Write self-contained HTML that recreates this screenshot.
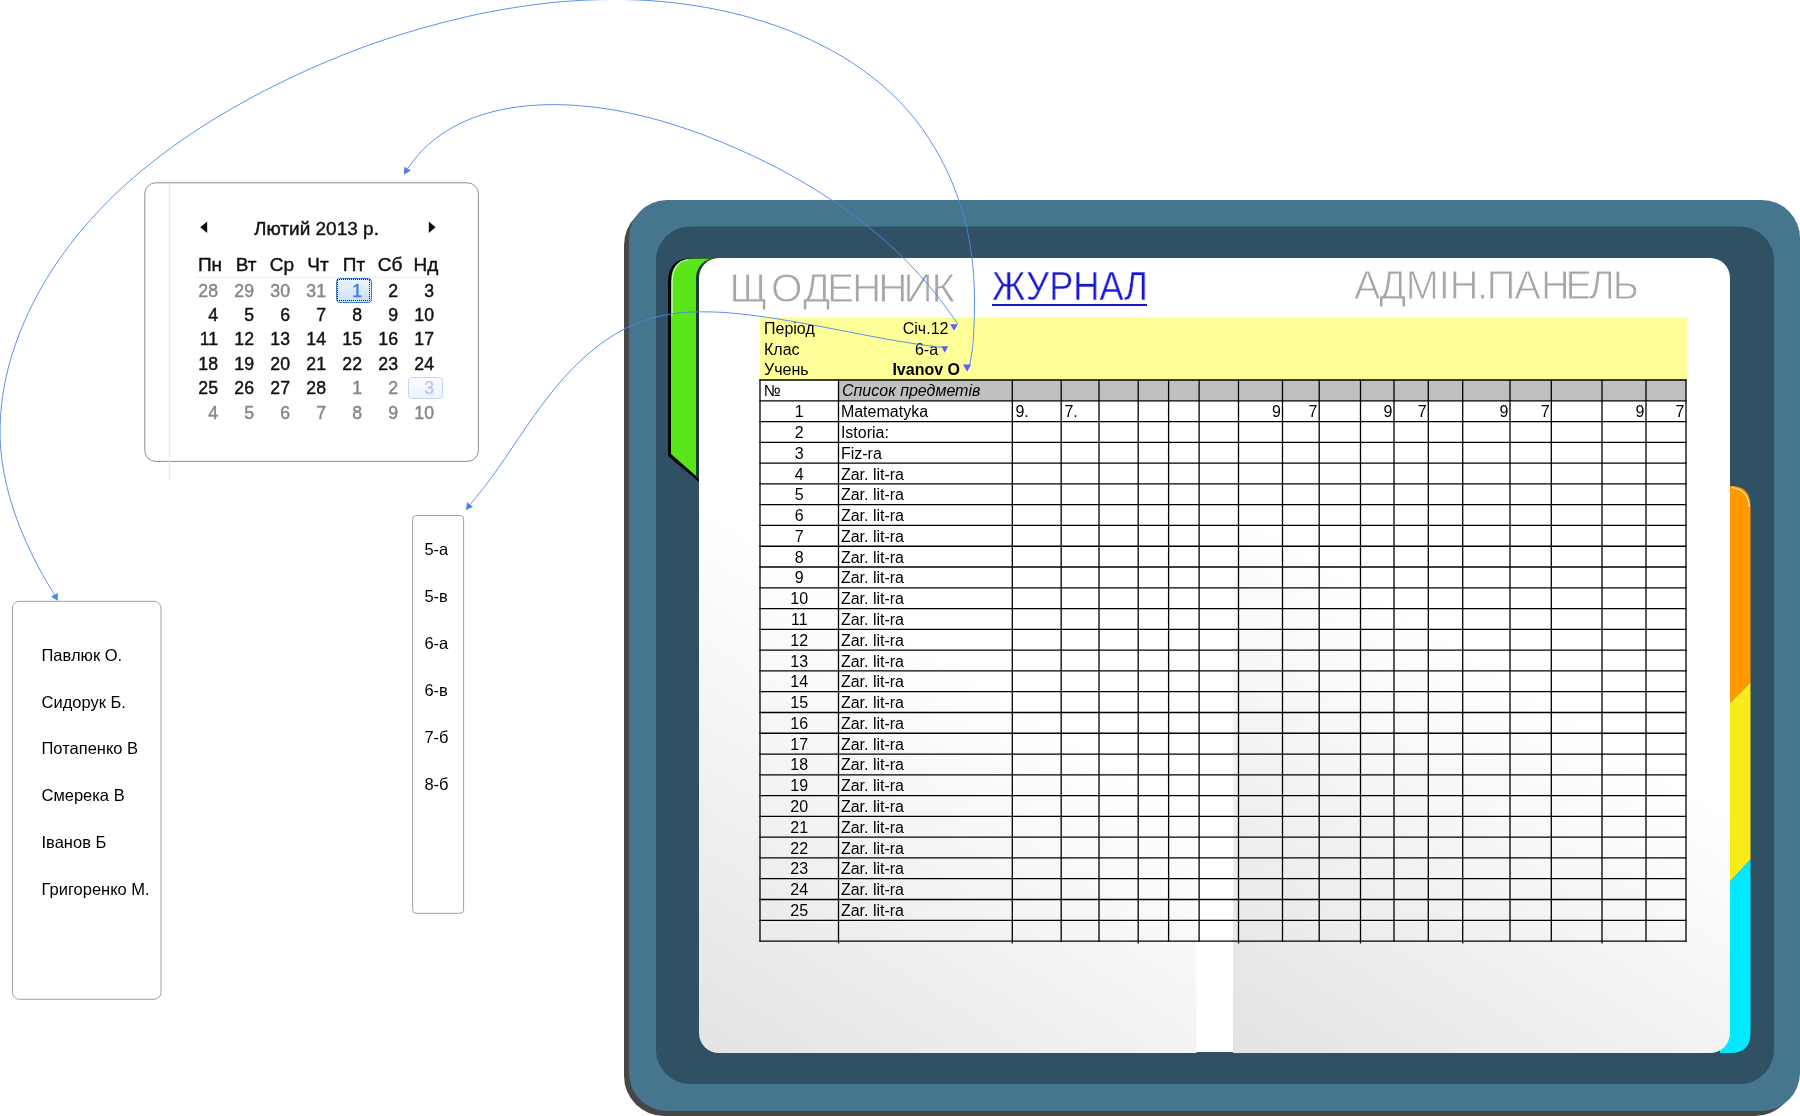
<!DOCTYPE html>
<html lang="uk"><head><meta charset="utf-8"><title>Журнал</title>
<style>
html,body{margin:0;padding:0;background:#fff;}
body{width:1800px;height:1116px;position:relative;overflow:hidden;font-family:"Liberation Sans",sans-serif;color:#000;}
#bg,#fg{position:absolute;left:0;top:0;}
#txt{position:absolute;left:0;top:0;width:1800px;height:1116px;will-change:transform;}
.t{position:absolute;white-space:nowrap;line-height:1;margin:0;}
.c{font-size:16px;}
.nav{font-size:39px;color:#a6a6a6;transform-origin:0 0;will-change:transform;-webkit-text-stroke:1.2px #fff;}
a.nav{color:#1616d4;text-decoration:none;-webkit-text-stroke:0.5px #fff;}
.cal{font-size:19px;color:#111;-webkit-text-stroke:0.45px currentColor;transform:scaleX(0.93);transform-origin:100% 50%;}
.cal.g{color:#858585;}
.calh{font-size:19px;color:#111;-webkit-text-stroke:0.4px currentColor;}
.li{font-size:16.5px;}
</style></head><body>

<svg id="bg" width="1800" height="1116" viewBox="0 0 1800 1116">
<defs><linearGradient id="pgl" gradientUnits="userSpaceOnUse" x1="1197" y1="258" x2="699" y2="1053"><stop offset="0" stop-color="#ffffff"/><stop offset="0.5" stop-color="#ffffff"/><stop offset="1" stop-color="#e3e3e3"/></linearGradient><linearGradient id="pgr" gradientUnits="userSpaceOnUse" x1="1730" y1="258" x2="1233" y2="1053"><stop offset="0" stop-color="#ffffff"/><stop offset="0.5" stop-color="#ffffff"/><stop offset="1" stop-color="#e3e3e3"/></linearGradient><clipPath id="pc"><rect x="699" y="258" width="1031" height="795" rx="20" ry="20"/></clipPath><clipPath id="gc"><path d="M671 454 L671 282 Q671 258.5 694 258.5 L720 258.5 L720 479 L699.5 479 Z"/></clipPath></defs>
<rect x="624" y="205" width="1171" height="911" rx="40" ry="40" fill="#474747"/>
<rect x="629" y="200" width="1171" height="911" rx="38" ry="38" fill="#46768e"/>
<rect x="656" y="226.5" width="1118" height="857.5" rx="34" ry="34" fill="#2f5163"/>
<path d="M668 482 L668 282 Q668 258 692 258 L720 258 L720 482 L699 482 L668 456 Z" fill="#05070c"/>
<path d="M671 454 L671 282 Q671 258.5 694 258.5 L720 258.5 L720 479 L699.5 479 Z" fill="#5ae619"/>
<path d="M672.2 316 L672.2 283 Q672.2 262 688 259.5" fill="none" stroke="#c9f7b0" stroke-width="1.2"/>
<rect x="696" y="258" width="200" height="795" rx="20" ry="20" fill="#1c3c3c" clip-path="url(#gc)"/>
<path d="M1720 486 L1730.5 486 Q1750.5 486 1750.5 506 L1750.5 682.5 L1730 703 L1720 703 Z" fill="#ff9900"/>
<path d="M1720 703 L1730 703 L1750.5 682.5 L1750.5 859.5 L1730 881.5 L1720 881.5 Z" fill="#f7ec19"/>
<path d="M1720 881.5 L1730 881.5 L1750.5 859.5 L1750.5 1033 Q1750.5 1053 1730.5 1053 L1720 1053 Z" fill="#00e9ff"/>
<path d="M1732 487.5 Q1748.5 490 1749.3 507" fill="none" stroke="#ffe9b8" stroke-width="1.2"/>
<g clip-path="url(#pc)"><rect x="699" y="258" width="498" height="795" fill="url(#pgl)"/><rect x="1233" y="258" width="497" height="795" fill="url(#pgr)"/><rect x="1196.5" y="258" width="36.5" height="794" fill="#ffffff"/><rect x="1196.5" y="1052" width="36.5" height="1" fill="#2f5163"/></g>
<rect x="760" y="317.3" width="927.6" height="62.7" fill="#ffff99"/>
<rect x="838.5" y="380" width="847.5" height="20.8" fill="#c0c0c0"/>
<rect x="760" y="380" width="78.5" height="20.8" fill="#ffffff"/>
<rect x="760" y="400.8" width="926" height="540.2" fill="#ffffff" fill-opacity="0"/>
<g stroke="#000" stroke-width="1.3" fill="none"><path d="M759.4 380.00 H1686.6"/><path d="M759.4 400.78 H1686.6"/><path d="M759.4 421.56 H1686.6"/><path d="M759.4 442.34 H1686.6"/><path d="M759.4 463.12 H1686.6"/><path d="M759.4 483.90 H1686.6"/><path d="M759.4 504.68 H1686.6"/><path d="M759.4 525.46 H1686.6"/><path d="M759.4 546.24 H1686.6"/><path d="M759.4 567.02 H1686.6"/><path d="M759.4 587.80 H1686.6"/><path d="M759.4 608.58 H1686.6"/><path d="M759.4 629.36 H1686.6"/><path d="M759.4 650.14 H1686.6"/><path d="M759.4 670.92 H1686.6"/><path d="M759.4 691.70 H1686.6"/><path d="M759.4 712.48 H1686.6"/><path d="M759.4 733.26 H1686.6"/><path d="M759.4 754.04 H1686.6"/><path d="M759.4 774.82 H1686.6"/><path d="M759.4 795.60 H1686.6"/><path d="M759.4 816.38 H1686.6"/><path d="M759.4 837.16 H1686.6"/><path d="M759.4 857.94 H1686.6"/><path d="M759.4 878.72 H1686.6"/><path d="M759.4 899.50 H1686.6"/><path d="M759.4 920.28 H1686.6"/><path d="M759.4 941.06 H1686.6"/><path d="M760.00 379.40 V941.66"/><path d="M838.50 379.40 V943.56"/><path d="M1012.30 379.40 V943.56"/><path d="M1061.20 379.40 V941.66"/><path d="M1099.00 379.40 V941.66"/><path d="M1138.20 379.40 V943.56"/><path d="M1168.60 379.40 V941.66"/><path d="M1199.10 379.40 V941.66"/><path d="M1238.50 379.40 V943.56"/><path d="M1282.50 379.40 V941.66"/><path d="M1319.20 379.40 V941.66"/><path d="M1360.50 379.40 V943.56"/><path d="M1394.00 379.40 V941.66"/><path d="M1428.30 379.40 V941.66"/><path d="M1462.70 379.40 V943.56"/><path d="M1510.00 379.40 V941.66"/><path d="M1551.30 379.40 V941.66"/><path d="M1602.00 379.40 V943.56"/><path d="M1646.00 379.40 V941.66"/><path d="M1686.00 379.40 V941.66"/></g>
<path d="M950.2 324.3 L957.8 324.3 L954.0 330.8 Z" fill="#5d5dff"/>
<path d="M941.2 346.2 L948.2 346.2 L944.7 352.8 Z" fill="#5d5dff"/>
<path d="M963.0 364.6 L971.2 364.6 L967.1 371.8 Z" fill="#5d5dff"/>
<rect x="144.8" y="182.8" width="333.6" height="278.6" rx="11" ry="11" fill="#fff" stroke="#8e8e8e" stroke-width="1"/>
<path d="M169.3 183 V479.5" stroke="#e4e4e4" stroke-width="1"/>
<rect x="12.4" y="601.3" width="148.6" height="398" rx="7" ry="7" fill="#fff" stroke="#a2a2a2" stroke-width="1"/>
<rect x="412.6" y="515.5" width="51" height="397.8" rx="3.5" ry="3.5" fill="#fff" stroke="#a2a2a2" stroke-width="1"/>
<path d="M200.2 227.2 L207.2 221.4 L207.2 233 Z" fill="#111"/>
<path d="M435.6 227.2 L428.8 221.4 L428.8 233 Z" fill="#111"/>
<path d="M197 277.4 H437" stroke="#f0f0f0" stroke-width="1.2"/>
</svg>
<div id="txt">
<svg id="nv" width="1800" height="340" viewBox="0 0 1800 340" style="position:absolute;left:0;top:0;"><text id="n1" x="729.6 771.1 802.9 827.1 852.0 878.2 903.5 931.4" y="302.4" font-family="Liberation Sans, sans-serif" font-size="40.5" fill="#a6a6a6" stroke="#ffffff" stroke-width="0.9">ЩОДЕННИК</text><text id="n3" x="1354.0 1379.2 1405.8 1438.8 1449.8 1477.0 1486.8 1514.3 1541.0 1565.6 1588.7 1612.8" y="298.9" font-family="Liberation Sans, sans-serif" font-size="39.8" fill="#a6a6a6" stroke="#ffffff" stroke-width="0.9">АДМІН.ПАНЕЛЬ</text></svg>
<a class="t nav" style="left:991.8px;top:267.0px;font-size:39.8px;transform:scaleX(0.908);" id="n2">ЖУРНАЛ</a>
<div class="t" id="n2u" style="left:992px;top:303.5px;width:154.6px;height:2.5px;background:#1616d4;"></div>
<div class="t c" style="left:764.0px;top:320.9px;">Період</div>
<div class="t c" style="left:764.0px;top:341.5px;">Клас</div>
<div class="t c" style="left:764.0px;top:362.1px;">Учень</div>
<div class="t c" style="left:825.6px;top:320.9px;width:200px;text-align:center;">Січ.12</div>
<div class="t c" style="left:826.5px;top:341.5px;width:200px;text-align:center;">6-а</div>
<div class="t c" style="left:826.2px;top:362.1px;width:200px;text-align:center;font-weight:bold;">Ivanov O</div>
<div class="t c" style="left:763.5px;top:382.5px;">№</div>
<div class="t c" style="left:842.0px;top:382.5px;font-style:italic;">Список предметів</div>
<div class="t c" style="left:760px;top:404.1px;width:78.5px;text-align:center;">1</div>
<div class="t c" style="left:840.9px;top:404.1px;">Matematyka</div>
<div class="t c" style="left:760px;top:424.9px;width:78.5px;text-align:center;">2</div>
<div class="t c" style="left:840.9px;top:424.9px;">Istoria:</div>
<div class="t c" style="left:760px;top:445.7px;width:78.5px;text-align:center;">3</div>
<div class="t c" style="left:840.9px;top:445.7px;">Fiz-ra</div>
<div class="t c" style="left:760px;top:466.5px;width:78.5px;text-align:center;">4</div>
<div class="t c" style="left:840.9px;top:466.5px;">Zar. lit-ra</div>
<div class="t c" style="left:760px;top:487.2px;width:78.5px;text-align:center;">5</div>
<div class="t c" style="left:840.9px;top:487.2px;">Zar. lit-ra</div>
<div class="t c" style="left:760px;top:508.0px;width:78.5px;text-align:center;">6</div>
<div class="t c" style="left:840.9px;top:508.0px;">Zar. lit-ra</div>
<div class="t c" style="left:760px;top:528.8px;width:78.5px;text-align:center;">7</div>
<div class="t c" style="left:840.9px;top:528.8px;">Zar. lit-ra</div>
<div class="t c" style="left:760px;top:549.6px;width:78.5px;text-align:center;">8</div>
<div class="t c" style="left:840.9px;top:549.6px;">Zar. lit-ra</div>
<div class="t c" style="left:760px;top:570.4px;width:78.5px;text-align:center;">9</div>
<div class="t c" style="left:840.9px;top:570.4px;">Zar. lit-ra</div>
<div class="t c" style="left:760px;top:591.1px;width:78.5px;text-align:center;">10</div>
<div class="t c" style="left:840.9px;top:591.1px;">Zar. lit-ra</div>
<div class="t c" style="left:760px;top:611.9px;width:78.5px;text-align:center;">11</div>
<div class="t c" style="left:840.9px;top:611.9px;">Zar. lit-ra</div>
<div class="t c" style="left:760px;top:632.7px;width:78.5px;text-align:center;">12</div>
<div class="t c" style="left:840.9px;top:632.7px;">Zar. lit-ra</div>
<div class="t c" style="left:760px;top:653.5px;width:78.5px;text-align:center;">13</div>
<div class="t c" style="left:840.9px;top:653.5px;">Zar. lit-ra</div>
<div class="t c" style="left:760px;top:674.3px;width:78.5px;text-align:center;">14</div>
<div class="t c" style="left:840.9px;top:674.3px;">Zar. lit-ra</div>
<div class="t c" style="left:760px;top:695.0px;width:78.5px;text-align:center;">15</div>
<div class="t c" style="left:840.9px;top:695.0px;">Zar. lit-ra</div>
<div class="t c" style="left:760px;top:715.8px;width:78.5px;text-align:center;">16</div>
<div class="t c" style="left:840.9px;top:715.8px;">Zar. lit-ra</div>
<div class="t c" style="left:760px;top:736.6px;width:78.5px;text-align:center;">17</div>
<div class="t c" style="left:840.9px;top:736.6px;">Zar. lit-ra</div>
<div class="t c" style="left:760px;top:757.4px;width:78.5px;text-align:center;">18</div>
<div class="t c" style="left:840.9px;top:757.4px;">Zar. lit-ra</div>
<div class="t c" style="left:760px;top:778.2px;width:78.5px;text-align:center;">19</div>
<div class="t c" style="left:840.9px;top:778.2px;">Zar. lit-ra</div>
<div class="t c" style="left:760px;top:798.9px;width:78.5px;text-align:center;">20</div>
<div class="t c" style="left:840.9px;top:798.9px;">Zar. lit-ra</div>
<div class="t c" style="left:760px;top:819.7px;width:78.5px;text-align:center;">21</div>
<div class="t c" style="left:840.9px;top:819.7px;">Zar. lit-ra</div>
<div class="t c" style="left:760px;top:840.5px;width:78.5px;text-align:center;">22</div>
<div class="t c" style="left:840.9px;top:840.5px;">Zar. lit-ra</div>
<div class="t c" style="left:760px;top:861.3px;width:78.5px;text-align:center;">23</div>
<div class="t c" style="left:840.9px;top:861.3px;">Zar. lit-ra</div>
<div class="t c" style="left:760px;top:882.1px;width:78.5px;text-align:center;">24</div>
<div class="t c" style="left:840.9px;top:882.1px;">Zar. lit-ra</div>
<div class="t c" style="left:760px;top:902.8px;width:78.5px;text-align:center;">25</div>
<div class="t c" style="left:840.9px;top:902.8px;">Zar. lit-ra</div>
<div class="t c" style="left:1015.4px;top:404.1px;">9.</div>
<div class="t c" style="left:1064.4px;top:404.1px;">7.</div>
<div class="t c" style="left:1220.8px;top:404.1px;width:60px;text-align:right;">9</div>
<div class="t c" style="left:1257.5px;top:404.1px;width:60px;text-align:right;">7</div>
<div class="t c" style="left:1332.3px;top:404.1px;width:60px;text-align:right;">9</div>
<div class="t c" style="left:1366.6px;top:404.1px;width:60px;text-align:right;">7</div>
<div class="t c" style="left:1448.3px;top:404.1px;width:60px;text-align:right;">9</div>
<div class="t c" style="left:1489.6px;top:404.1px;width:60px;text-align:right;">7</div>
<div class="t c" style="left:1584.3px;top:404.1px;width:60px;text-align:right;">9</div>
<div class="t c" style="left:1624.3px;top:404.1px;width:60px;text-align:right;">7</div>
<div class="t calh" id="caltitle" style="left:166.5px;top:219.2px;width:300px;text-align:center;">Лютий 2013 р.</div>
<div class="t calh" style="left:192.0px;top:255.0px;width:36px;text-align:center;">Пн</div>
<div class="t calh" style="left:228.0px;top:255.0px;width:36px;text-align:center;">Вт</div>
<div class="t calh" style="left:264.0px;top:255.0px;width:36px;text-align:center;">Ср</div>
<div class="t calh" style="left:300.0px;top:255.0px;width:36px;text-align:center;">Чт</div>
<div class="t calh" style="left:336.0px;top:255.0px;width:36px;text-align:center;">Пт</div>
<div class="t calh" style="left:372.0px;top:255.0px;width:36px;text-align:center;">Сб</div>
<div class="t calh" style="left:408.0px;top:255.0px;width:36px;text-align:center;">Нд</div>
<div class="t" style="box-sizing:border-box;left:335.5px;top:277.5px;width:36px;height:25px;border:1.5px solid #3d7fd8;border-radius:4px;background:linear-gradient(#eef4fd,#cddff7);"></div>
<div class="t" style="box-sizing:border-box;left:337px;top:279px;width:33px;height:22px;border:1px dotted #0f2260;border-radius:1px;"></div>
<div class="t" style="box-sizing:border-box;left:407.8px;top:376.6px;width:35.4px;height:22.8px;border:1px solid #c3d4f4;border-radius:3.5px;background:linear-gradient(#fbfcff,#eef3fc);"></div>
<div class="t cal g" style="left:182.4px;top:280.5px;width:36px;text-align:right;">28</div>
<div class="t cal g" style="left:218.4px;top:280.5px;width:36px;text-align:right;">29</div>
<div class="t cal g" style="left:254.4px;top:280.5px;width:36px;text-align:right;">30</div>
<div class="t cal g" style="left:290.4px;top:280.5px;width:36px;text-align:right;">31</div>
<div class="t cal" style="left:326.4px;top:280.5px;width:36px;text-align:right;color:#3b80e6;">1</div>
<div class="t cal" style="left:362.4px;top:280.5px;width:36px;text-align:right;">2</div>
<div class="t cal" style="left:398.4px;top:280.5px;width:36px;text-align:right;">3</div>
<div class="t cal" style="left:182.4px;top:304.9px;width:36px;text-align:right;">4</div>
<div class="t cal" style="left:218.4px;top:304.9px;width:36px;text-align:right;">5</div>
<div class="t cal" style="left:254.4px;top:304.9px;width:36px;text-align:right;">6</div>
<div class="t cal" style="left:290.4px;top:304.9px;width:36px;text-align:right;">7</div>
<div class="t cal" style="left:326.4px;top:304.9px;width:36px;text-align:right;">8</div>
<div class="t cal" style="left:362.4px;top:304.9px;width:36px;text-align:right;">9</div>
<div class="t cal" style="left:398.4px;top:304.9px;width:36px;text-align:right;">10</div>
<div class="t cal" style="left:182.4px;top:329.4px;width:36px;text-align:right;">11</div>
<div class="t cal" style="left:218.4px;top:329.4px;width:36px;text-align:right;">12</div>
<div class="t cal" style="left:254.4px;top:329.4px;width:36px;text-align:right;">13</div>
<div class="t cal" style="left:290.4px;top:329.4px;width:36px;text-align:right;">14</div>
<div class="t cal" style="left:326.4px;top:329.4px;width:36px;text-align:right;">15</div>
<div class="t cal" style="left:362.4px;top:329.4px;width:36px;text-align:right;">16</div>
<div class="t cal" style="left:398.4px;top:329.4px;width:36px;text-align:right;">17</div>
<div class="t cal" style="left:182.4px;top:353.8px;width:36px;text-align:right;">18</div>
<div class="t cal" style="left:218.4px;top:353.8px;width:36px;text-align:right;">19</div>
<div class="t cal" style="left:254.4px;top:353.8px;width:36px;text-align:right;">20</div>
<div class="t cal" style="left:290.4px;top:353.8px;width:36px;text-align:right;">21</div>
<div class="t cal" style="left:326.4px;top:353.8px;width:36px;text-align:right;">22</div>
<div class="t cal" style="left:362.4px;top:353.8px;width:36px;text-align:right;">23</div>
<div class="t cal" style="left:398.4px;top:353.8px;width:36px;text-align:right;">24</div>
<div class="t cal" style="left:182.4px;top:378.2px;width:36px;text-align:right;">25</div>
<div class="t cal" style="left:218.4px;top:378.2px;width:36px;text-align:right;">26</div>
<div class="t cal" style="left:254.4px;top:378.2px;width:36px;text-align:right;">27</div>
<div class="t cal" style="left:290.4px;top:378.2px;width:36px;text-align:right;">28</div>
<div class="t cal g" style="left:326.4px;top:378.2px;width:36px;text-align:right;">1</div>
<div class="t cal g" style="left:362.4px;top:378.2px;width:36px;text-align:right;">2</div>
<div class="t cal g" style="left:398.4px;top:378.2px;width:36px;text-align:right;color:#bcc8f0;">3</div>
<div class="t cal g" style="left:182.4px;top:402.7px;width:36px;text-align:right;">4</div>
<div class="t cal g" style="left:218.4px;top:402.7px;width:36px;text-align:right;">5</div>
<div class="t cal g" style="left:254.4px;top:402.7px;width:36px;text-align:right;">6</div>
<div class="t cal g" style="left:290.4px;top:402.7px;width:36px;text-align:right;">7</div>
<div class="t cal g" style="left:326.4px;top:402.7px;width:36px;text-align:right;">8</div>
<div class="t cal g" style="left:362.4px;top:402.7px;width:36px;text-align:right;">9</div>
<div class="t cal g" style="left:398.4px;top:402.7px;width:36px;text-align:right;">10</div>
<div class="t li" style="left:41.5px;top:646.5px;">Павлюк О.</div>
<div class="t li" style="left:41.5px;top:693.5px;">Сидорук Б.</div>
<div class="t li" style="left:41.5px;top:740.4px;">Потапенко В</div>
<div class="t li" style="left:41.5px;top:787.4px;">Смерека В</div>
<div class="t li" style="left:41.5px;top:834.3px;">Іванов Б</div>
<div class="t li" style="left:41.5px;top:881.3px;">Григоренко М.</div>
<div class="t li" style="left:424.4px;top:541.0px;">5-а</div>
<div class="t li" style="left:424.4px;top:588.0px;">5-в</div>
<div class="t li" style="left:424.4px;top:634.9px;">6-а</div>
<div class="t li" style="left:424.4px;top:681.9px;">6-в</div>
<div class="t li" style="left:424.4px;top:728.8px;">7-б</div>
<div class="t li" style="left:424.4px;top:775.8px;">8-б</div>
</div>
<svg id="fg" width="1800" height="1116" viewBox="0 0 1800 1116">
<g fill="none" stroke="#4a86e8" stroke-width="0.9">
<path d="M54.6 595.0 C52.6 591.6 46.5 581.6 42.6 574.7 C38.8 567.8 35.0 560.7 31.5 553.4 C28.0 546.1 24.6 538.7 21.5 531.1 C18.4 523.5 15.5 515.8 13.0 508.0 C10.5 500.2 8.2 492.4 6.4 484.5 C4.6 476.6 3.0 468.6 2.0 460.7 C0.9 452.8 0.3 444.8 0.1 436.8 C-0.1 428.8 0.2 420.8 0.8 412.9 C1.4 405.0 2.4 397.0 3.7 389.2 C5.0 381.4 6.8 373.5 8.8 365.8 C10.9 358.1 13.3 350.4 16.0 342.8 C18.7 335.2 21.7 327.7 24.9 320.3 C28.1 312.9 31.6 305.6 35.4 298.5 C39.1 291.4 43.2 284.3 47.4 277.4 C51.6 270.5 56.1 263.8 60.7 257.2 C65.3 250.6 70.2 244.2 75.2 237.9 C80.2 231.6 85.4 225.6 90.7 219.6 C96.0 213.6 101.6 207.8 107.2 202.1 C112.8 196.4 118.6 190.9 124.5 185.5 C130.4 180.1 136.5 174.9 142.7 169.8 C148.9 164.7 155.2 159.7 161.6 154.8 C168.0 149.9 174.6 145.2 181.2 140.6 C187.8 136.0 194.6 131.5 201.4 127.1 C208.2 122.7 215.1 118.5 222.0 114.4 C228.9 110.3 235.9 106.2 243.0 102.3 C250.1 98.4 257.1 94.5 264.3 90.8 C271.5 87.1 278.8 83.5 286.0 80.0 C293.2 76.5 300.5 73.1 307.8 69.8 C315.1 66.5 322.6 63.3 330.0 60.2 C337.4 57.1 344.8 54.2 352.3 51.3 C359.8 48.4 367.3 45.6 374.9 43.0 C382.5 40.4 390.1 37.8 397.8 35.4 C405.5 33.0 413.1 30.7 420.8 28.5 C428.5 26.3 436.2 24.2 444.0 22.2 C451.8 20.2 459.6 18.3 467.5 16.5 C475.4 14.7 483.2 13.1 491.1 11.6 C499.0 10.1 506.9 8.8 514.9 7.5 C522.8 6.2 530.8 5.1 538.8 4.1 C546.8 3.1 554.7 2.3 562.7 1.6 C570.7 0.9 578.8 0.5 586.8 0.1 C594.8 -0.2 602.8 -0.5 610.8 -0.5 C618.8 -0.6 626.9 -0.5 634.9 -0.2 C642.9 0.1 650.9 0.6 658.9 1.3 C666.9 2.0 674.9 2.8 682.9 3.9 C690.9 5.0 698.9 6.2 706.8 7.6 C714.7 9.0 722.6 10.7 730.5 12.5 C738.4 14.3 746.3 16.4 754.1 18.7 C761.9 21.0 769.6 23.5 777.3 26.2 C785.0 28.9 792.6 31.9 800.1 35.1 C807.6 38.3 814.9 41.7 822.1 45.4 C829.3 49.1 836.4 53.0 843.2 57.1 C850.1 61.2 856.7 65.6 863.2 70.3 C869.7 75.0 876.0 79.8 882.0 85.0 C888.0 90.2 893.9 95.6 899.4 101.3 C904.9 107.0 910.2 113.0 915.1 119.2 C920.0 125.4 924.6 131.9 929.0 138.6 C933.4 145.3 937.4 152.3 941.2 159.4 C945.0 166.5 948.5 173.8 951.6 181.2 C954.7 188.6 957.5 196.2 960.0 203.9 C962.5 211.6 964.8 219.4 966.6 227.3 C968.5 235.2 969.9 243.1 971.1 251.1 C972.3 259.1 973.0 267.1 973.6 275.1 C974.2 283.1 974.4 291.2 974.5 299.2 C974.6 307.2 974.4 315.3 974.1 323.3 C973.8 331.3 973.3 340.4 972.6 347.3 C971.9 354.2 970.2 362.1 969.7 365.0"/>
<path d="M407.5 168.6 C410.1 165.4 417.5 155.1 423.2 149.4 C428.9 143.7 435.2 138.7 441.7 134.2 C448.2 129.7 455.2 125.9 462.3 122.5 C469.4 119.1 476.9 116.3 484.5 114.0 C492.1 111.7 500.0 109.8 507.9 108.4 C515.8 107.0 523.8 106.0 531.9 105.4 C540.0 104.8 548.1 104.5 556.3 104.6 C564.4 104.7 572.7 105.1 580.8 105.8 C588.9 106.5 597.0 107.4 605.0 108.6 C613.0 109.8 621.0 111.2 628.9 112.9 C636.8 114.6 644.7 116.4 652.5 118.5 C660.3 120.6 668.0 122.8 675.7 125.3 C683.4 127.8 691.0 130.4 698.6 133.2 C706.2 136.0 713.7 138.8 721.2 141.9 C728.7 145.0 736.0 148.2 743.4 151.5 C750.8 154.8 758.1 158.3 765.4 161.9 C772.6 165.5 779.8 169.2 786.9 173.1 C794.0 177.0 801.0 180.9 807.9 185.1 C814.8 189.2 821.7 193.6 828.5 198.0 C835.3 202.4 842.0 206.9 848.5 211.6 C855.0 216.3 861.4 221.2 867.7 226.2 C874.0 231.2 880.2 236.5 886.2 241.8 C892.2 247.2 898.1 252.6 903.8 258.3 C909.5 264.0 915.0 269.9 920.4 275.9 C925.8 281.9 931.0 288.1 936.1 294.4 C941.2 300.7 947.1 309.0 950.7 313.9 C954.3 318.8 956.5 322.3 957.6 324.0"/>
<path d="M470.1 504.5 C472.7 501.4 480.5 492.0 485.4 485.6 C490.3 479.2 495.0 472.6 499.7 466.0 C504.4 459.4 508.8 452.6 513.4 445.9 C518.0 439.2 522.5 432.4 527.1 425.7 C531.8 419.0 536.4 412.3 541.3 405.8 C546.2 399.3 551.1 392.8 556.4 386.5 C561.7 380.2 567.2 374.0 573.0 368.2 C578.8 362.4 584.7 356.7 591.0 351.5 C597.3 346.3 603.8 341.3 610.6 337.0 C617.4 332.7 624.4 328.7 631.6 325.5 C638.8 322.3 646.3 319.7 653.9 317.6 C661.5 315.6 669.4 314.2 677.3 313.2 C685.2 312.2 693.4 311.9 701.5 311.8 C709.6 311.7 717.9 312.1 726.1 312.6 C734.3 313.2 742.6 314.1 750.8 315.1 C759.0 316.1 767.2 317.2 775.3 318.5 C783.4 319.8 791.4 321.2 799.4 322.6 C807.4 324.0 815.4 325.5 823.3 327.0 C831.2 328.5 839.1 330.1 847.0 331.6 C854.9 333.1 862.9 334.7 870.8 336.2 C878.7 337.7 886.6 339.1 894.6 340.5 C902.6 341.9 910.6 343.2 918.7 344.4 C926.8 345.6 939.0 347.1 943.0 347.6"/>
</g>
<path d="M57.6 600.8 L51.0 596.5 L57.9 592.9 Z" fill="#4a86e8"/>
<path d="M403.9 174.8 L404.3 166.7 L410.9 170.6 Z" fill="#4a86e8"/>
<path d="M465.8 510.2 L467.1 502.3 L473.0 506.8 Z" fill="#4a86e8"/>
</svg>
</body></html>
